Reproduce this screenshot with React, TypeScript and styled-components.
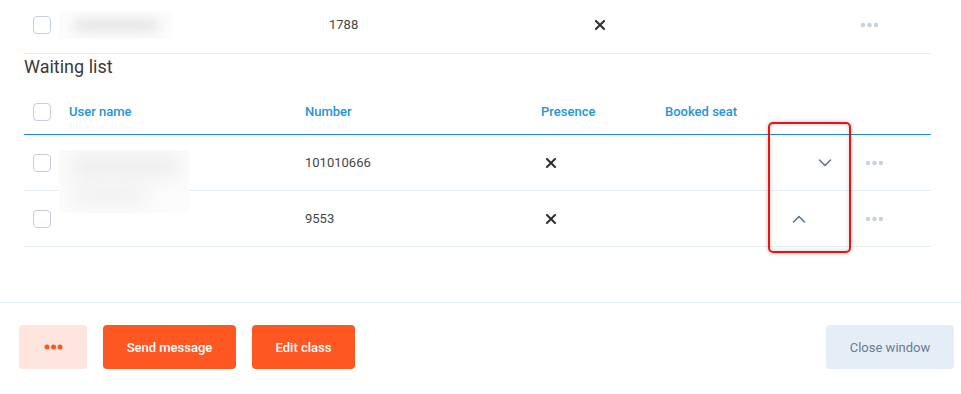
import React from 'react';
import styled, { createGlobalStyle } from 'styled-components';

const GlobalStyle = createGlobalStyle`
  html, body {
    margin: 0;
    padding: 0;
    background: #ffffff;
  }
  body {
    font-family: Roboto, 'Liberation Sans', Arial, sans-serif;
    color: #444444;
  }
`;

const CrossIcon = () => (
  <svg width="10" height="10" viewBox="0 0 10 10">
    <path d="M1 1L9 9M9 1L1 9" stroke="#2f2f2f" strokeWidth="2" strokeLinecap="square" />
  </svg>
);

const Chevron = ({ up }: { up?: boolean }) => (
  <svg width="14" height="8" viewBox="0 0 14 8">
    <path
      d={up ? 'M1.5 7L7 1.5L12.5 7' : 'M1.5 1L7 6.5L12.5 1'}
      stroke="#5f788f"
      strokeWidth="1.6"
      fill="none"
      strokeLinecap="round"
      strokeLinejoin="round"
    />
  </svg>
);

const Dots = ({ color, r = 2.2 }: { color: string; r?: number }) => (
  <svg width="19" height="6" viewBox="0 0 19 6">
    <circle cx="3" cy="3" r={r} fill={color} />
    <circle cx="9.5" cy="3" r={r} fill={color} />
    <circle cx="16" cy="3" r={r} fill={color} />
  </svg>
);

const WAITING = [
  { id: 1, number: '101010666', down: true, up: false },
  { id: 2, number: '9553', down: false, up: true },
];

const App = () => {
  return (
    <>
      <GlobalStyle />
      <Page>
        <Panel>
          <TopRow>
            <Cell>
              <CheckBox />
            </Cell>
            <Cell>
              <SmallRedaction />
            </Cell>
            <NumberCell>1788</NumberCell>
            <Cell>
              <CrossIcon />
            </Cell>
            <Cell />
            <Cell>
              <Dots color="#c6d1dc" />
            </Cell>
            <Cell />
          </TopRow>

          <SectionTitle>Waiting list</SectionTitle>

          <HeaderRow>
            <Cell>
              <CheckBox />
            </Cell>
            <HeadCell $indent={10}>User name</HeadCell>
            <HeadCell>Number</HeadCell>
            <HeadCell>Presence</HeadCell>
            <HeadCell>Booked seat</HeadCell>
            <Cell />
            <Cell />
            <Cell />
            <Cell />
            <Cell />
          </HeaderRow>

          {WAITING.map(({ id, number, up, down }, index) => (
            <WaitingRow key={id}>
              <Cell>
                <CheckBox />
              </Cell>
              <NameCell>{index === 0 && <BigRedaction />}</NameCell>
              <NumberCell>{number}</NumberCell>
              <Cell $indent={5}>
                <CrossIcon />
              </Cell>
              <Cell />
              <MoveCell>{up && <Chevron up />}</MoveCell>
              <MoveCell>{down && <Chevron />}</MoveCell>
              <Cell />
              <Cell>
                <Dots color="#c6d1dc" />
              </Cell>
              <Cell />
            </WaitingRow>
          ))}
        </Panel>

        <Footer>
          <FooterGroup>
            <MoreButton>
              <Dots color="#ff5722" r={2.5} />
            </MoreButton>
            <PrimaryButton $width={133}>Send message</PrimaryButton>
            <PrimaryButton $width={103}>Edit class</PrimaryButton>
          </FooterGroup>
          <CloseButton>Close window</CloseButton>
        </Footer>

        <Highlight />
      </Page>
    </>
  );
};

const Page = styled.div`
  position: relative;
  width: 961px;
  height: 394px;
  overflow: hidden;
`;

const Panel = styled.div`
  padding: 0 30px 0 24px;
`;

const Cell = styled.div<{ $indent?: number }>`
  display: flex;
  align-items: center;
  padding-left: ${props => props.$indent || 0}px;
  min-width: 0;
`;

const NumberCell = styled(Cell)`
  font-size: 13px;
  color: #454545;
`;

const NameCell = styled(Cell)`
  position: relative;
  align-self: stretch;
`;

const MoveCell = styled(Cell)`
  justify-content: center;
`;

const HeadCell = styled(Cell)`
  font-size: 13px;
  font-weight: 500;
  color: #2594d9;
`;

const CheckBox = styled.span`
  display: block;
  box-sizing: border-box;
  width: 18px;
  height: 18px;
  margin-left: 9px;
  border: 1px solid #c4cfda;
  border-radius: 4px;
  background: #ffffff;
`;

const TopRow = styled.div`
  display: grid;
  grid-template-columns: 35px 270px 266px 20px 245px 19px 1fr;
  align-items: center;
  height: 49px;
  padding-bottom: 4px;
  border-bottom: 1px solid #e6eef5;
`;

const SmallRedaction = styled.div`
  position: relative;
  width: 113px;
  height: 28px;
  background: #fcfcfc;
  overflow: hidden;

  &::after {
    content: '';
    position: absolute;
    left: 14px;
    top: 9px;
    width: 86px;
    height: 11px;
    border-radius: 8px;
    background: #e2e2e2;
    filter: blur(6px);
  }
`;

const BigRedaction = styled.div`
  position: absolute;
  left: 0;
  top: 15px;
  width: 130px;
  height: 63px;
  background: #fcfcfc;
  overflow: hidden;
  z-index: 1;

  &::before,
  &::after {
    content: '';
    position: absolute;
    border-radius: 12px;
    filter: blur(10px);
  }

  &::before {
    left: 10px;
    top: 6px;
    width: 112px;
    height: 20px;
    background: #ebebeb;
  }

  &::after {
    left: 12px;
    top: 36px;
    width: 76px;
    height: 18px;
    background: #eeeeee;
  }
`;

const SectionTitle = styled.div`
  margin-top: 2px;
  font-size: 18px;
  line-height: 21px;
  color: #3a3a3a;
`;

const tableColumns = '35px 246px 236px 124px 121px 26px 26px 27px 19px 1fr';

const HeaderRow = styled.div`
  display: grid;
  grid-template-columns: ${tableColumns};
  align-items: center;
  height: 45px;
  margin-top: 12px;
  border-bottom: 1px solid #1e8ad3;
`;

const WaitingRow = styled.div`
  display: grid;
  grid-template-columns: ${tableColumns};
  align-items: center;
  height: 55px;
  border-bottom: 1px solid #e6eef5;
`;

const Footer = styled.div`
  display: flex;
  justify-content: space-between;
  align-items: center;
  margin-top: 55px;
  padding: 22px 7px 0 19px;
  border-top: 1px solid #e3edf5;
`;

const FooterGroup = styled.div`
  display: flex;
  gap: 16px;
`;

const BaseButton = styled.button`
  display: flex;
  justify-content: center;
  align-items: center;
  height: 44px;
  padding: 0;
  border: none;
  border-radius: 4px;
  font-family: Roboto, 'Liberation Sans', Arial, sans-serif;
  font-size: 13px;
`;

const MoreButton = styled(BaseButton)`
  width: 68px;
  background-color: #fee5dd;
`;

const PrimaryButton = styled(BaseButton)<{ $width: number }>`
  width: ${props => props.$width}px;
  background-color: #ff5722;
  color: #ffffff;
  font-weight: 500;
`;

const CloseButton = styled(BaseButton)`
  width: 128px;
  background-color: #e5eef6;
  color: #687d92;
`;

const Highlight = styled.div`
  position: absolute;
  left: 768px;
  top: 122px;
  width: 83px;
  height: 131px;
  box-sizing: border-box;
  border: 2px solid #ee1111;
  border-radius: 5px;
  box-shadow: 0 0 4px rgba(0, 0, 0, 0.25), inset 0 0 4px rgba(0, 0, 0, 0.2);
  pointer-events: none;
`;

export default App;
